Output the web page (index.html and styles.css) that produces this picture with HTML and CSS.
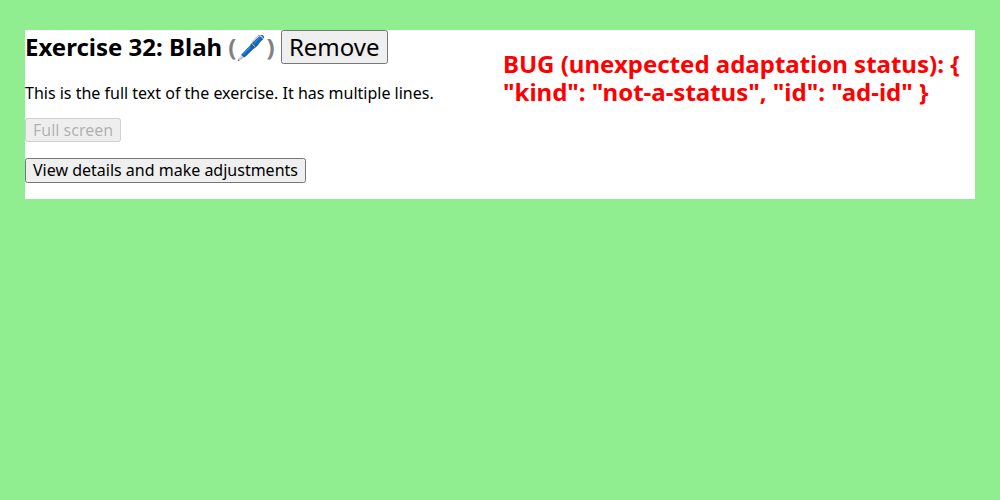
FILE: index.html
```html
<!DOCTYPE html>
<html lang="en">
<head>
<meta charset="utf-8">
<title>Exercise</title>
<link rel="stylesheet" href="styles.css">
</head>
<body>
<main class="exercise">
<section class="column">
<h2 class="title">Exercise 32: Blah <span class="edit">(🖊️)</span> <button class="button">Remove</button></h2>
<p class="text">This is the full text of the exercise. It has multiple lines.</p>
<p class="text"><button class="button" disabled>Full screen</button></p>
<p class="text"><button class="button">View details and make adjustments</button></p>
</section>
<section class="column">
<h2 class="bug">BUG (unexpected adaptation status): { "kind": "not-a-status", "id": "ad-id" }</h2>
</section>
</main>
</body>
</html>
```

FILE: styles.css
```css
body {
  margin: 0;
  padding: 30px 25px;
  background: lightgreen;
  font-family: "Noto Sans", sans-serif;
  font-size: 16px;
  line-height: 1.15;
}
.exercise {
  display: grid;
  grid-template-columns: 1fr 1fr;
  column-gap: 6px;
  background: white;
}
.title {
  margin: 0 0 20px;
  font-size: 24px;
}
.edit { color: gray; }
.button {
  font-family: inherit;
  font-size: 100%;
  line-height: 1.15;
  margin: 0;
}
.text { margin: 16px 0; }
.bug {
  margin: 20px 0;
  font-size: 24px;
  color: red;
}
```
